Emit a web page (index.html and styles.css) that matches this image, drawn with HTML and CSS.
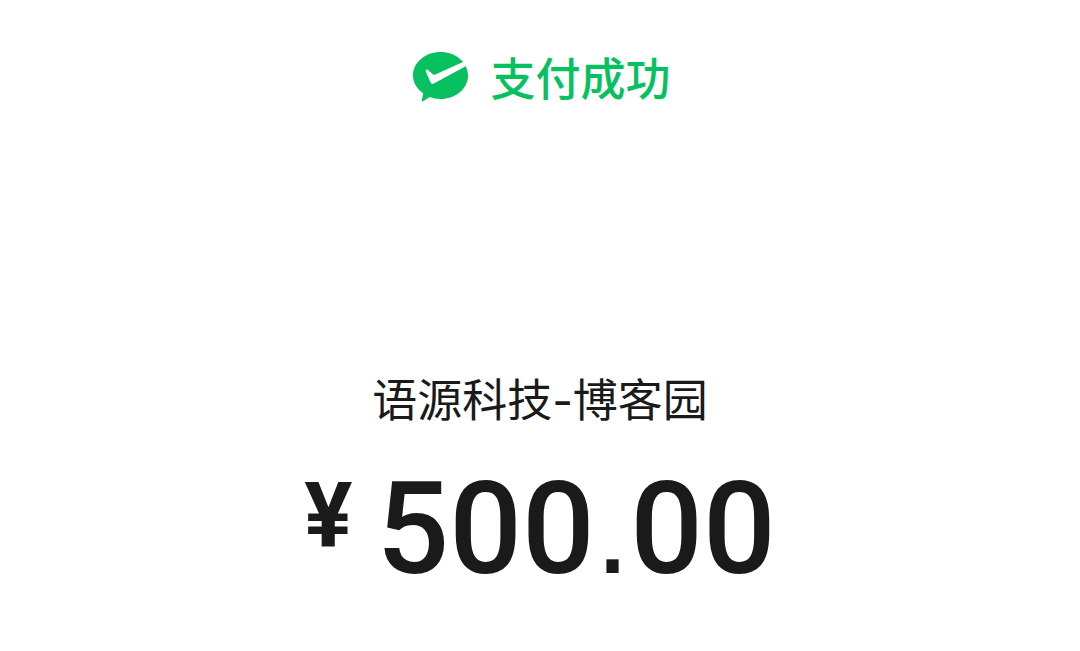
FILE: index.html
```html
<!DOCTYPE html>
<html lang="zh-CN">
<head>
    <meta charset="UTF-8">
    <meta name="viewport" content="width=device-width, initial-scale=1.0">
    <title>支付成功</title>
    <link rel="stylesheet" href="styles.css">
</head>
<body>
    <main class="receipt">
        <h1 class="status">
            <svg class="status-icon" viewBox="0 0 55 50" aria-hidden="true">
                <path class="bubble" d="M27.500 0C12.300 0 0 10.500 0 23.500c0 7.200 4 13.500 10.200 17.800L8.800 48.500c-.1.900.5 1.200 1.200.7l6.800-4.200c3.200 1.200 6.600 2 10.700 2C42.700 47 55 36.500 55 23.500S42.700 0 27.500 0z"/>
                <path class="check" d="M12.800 19.500c-.5-1.500.9-2.500 2.200-1.500l4.500 4.100c.8.700 1.700.8 2.800.3L50.500 9.800l4 3.500L20.800 31.500c-1.300.8-2.600.4-3.200-1z"/>
            </svg>
            支付成功
        </h1>
        <p class="payee">语源科技-博客园</p>
        <p class="amount"><span class="currency">¥</span><span class="value">500<span class="point">.</span>00</span></p>
    </main>
</body>
</html>
```
FILE: styles.css
```css
body {
    margin: 0;
    background-color: #fff;
    color: #1a1a1a;
    font-family: "Noto Sans CJK SC", sans-serif;
}
.receipt {
    display: flex;
    flex-direction: column;
    align-items: center;
    padding: 45px 20px 40px;
}
.status {
    display: flex;
    align-items: center;
    gap: 22px;
    margin: 0;
    padding-left: 4px;
    color: #07c160;
    font-size: 45px;
    font-weight: 500;
    line-height: 64px;
}
.status-icon {
    width: 55px;
    height: 50px;
}
.bubble {
    fill: #07c160;
}
.check {
    fill: #fff;
}
.payee {
    margin: 260px 0 0;
    font-family: Inter, "Noto Sans CJK SC", sans-serif;
    font-size: 45px;
    line-height: 64px;
}
.amount {
    display: flex;
    align-items: flex-start;
    gap: 24px;
    margin: 28px 0 0;
    font-family: Roboto, sans-serif;
    font-weight: 500;
}
.currency {
    font-size: 90px;
    font-weight: 700;
    line-height: 112px;
}
.value {
    font-size: 128px;
    line-height: 136px;
}
/* square decimal point */
.point {
    font-family: "Liberation Sans", Arial, sans-serif;
    font-weight: 400;
}
```
